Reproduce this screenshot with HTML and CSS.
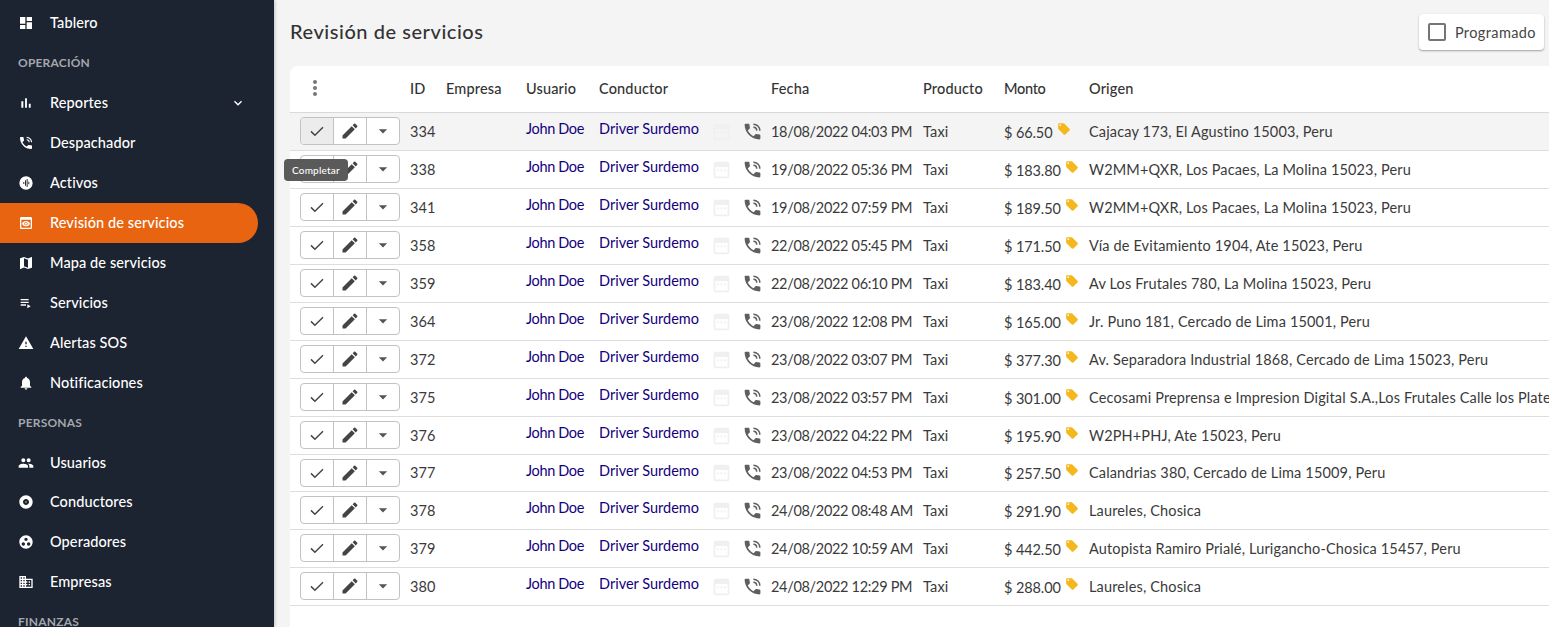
FILE: index.html
```html
<!DOCTYPE html>
<html lang="es">
<head>
  <meta charset="UTF-8">
  <title>Revisión de servicios</title>
  <link rel="stylesheet" href="styles.css">
</head>
<body>
  <svg class="sprite" xmlns="http://www.w3.org/2000/svg">
    <symbol id="i-dashboard" viewBox="0 0 24 24"><path d="M3 13h8V3H3v10zm0 8h8v-6H3v6zm10 0h8V11h-8v10zm0-18v6h8V3h-8z"/></symbol>
    <symbol id="i-bars" viewBox="0 0 24 24"><path d="M5 9.200h3V19H5zM10.600 5h2.800v14h-2.800zm5.600 8H19v6h-2.800z"/></symbol>
    <symbol id="i-phone" viewBox="0 0 24 24"><path d="M20 15.500c-1.250 0-2.450-.2-3.570-.57-.35-.11-.74-.03-1.020.24l-2.200 2.200c-2.830-1.440-5.150-3.750-6.590-6.590l2.200-2.210c.28-.26.36-.65.25-1-.37-1.120-.57-2.320-.57-3.570 0-.55-.45-1-1-1H4c-.55 0-1 .45-1 1 0 9.390 7.610 17 17 17 .55 0 1-.45 1-1v-3.500c0-.55-.45-1-1-1z"/><path d="M13 3.600a7.400 7.400 0 0 1 7.400 7.400M13 7.200a3.800 3.800 0 0 1 3.800 3.800" fill="none" stroke="currentColor" stroke-width="1.700"/></symbol>
    <symbol id="i-waves" viewBox="0 0 24 24"><path fill-rule="evenodd" d="M12 2a10 10 0 1 0 0 20 10 10 0 0 0 0-20zM8 10.500h1.400v3H8zm2.500-2.500h1.400v8h-1.400zm2.500-2h1.400v12H13zm2.500 4h1.400v4h-1.400z"/></symbol>
    <symbol id="i-preview" viewBox="0 0 24 24"><path d="M19 3H5c-1.110 0-2 .9-2 2v14c0 1.100.89 2 2 2h14c1.100 0 2-.9 2-2V5c0-1.100-.89-2-2-2zm0 16H5V7h14v12zm-5.500-6c0 .83-.67 1.500-1.500 1.500s-1.500-.67-1.500-1.500.67-1.500 1.500-1.500 1.500.67 1.500 1.500zM12 9c-2.730 0-5.060 1.660-6 4 .94 2.340 3.270 4 6 4s5.060-1.660 6-4c-.94-2.340-3.270-4-6-4zm0 6.500c-1.380 0-2.500-1.120-2.500-2.500s1.120-2.500 2.500-2.500 2.500 1.120 2.500 2.500-1.120 2.500-2.500 2.500z"/></symbol>
    <symbol id="i-map" viewBox="0 0 24 24"><path d="M20.500 3l-.16.03L15 5.100 9 3 3.360 4.900c-.21.07-.36.25-.36.48V20.500c0 .28.22.5.5.5l.16-.03L9 18.900l6 2.100 5.640-1.900c.21-.07.36-.25.36-.48V3.500c0-.28-.22-.5-.5-.5zM15 19l-6-2.110V5l6 2.110V19z"/></symbol>
    <symbol id="i-playlist" viewBox="0 0 24 24"><path d="M4 10h12v2H4zm0-4h12v2H4zm0 8h8v2H4zm10 0v6l5-3z"/></symbol>
    <symbol id="i-warning" viewBox="0 0 24 24"><path d="M1 21h22L12 2 1 21zm12-3h-2v-2h2v2zm0-4h-2v-4h2v4z"/></symbol>
    <symbol id="i-bell" viewBox="0 0 24 24"><path d="M12 22c1.100 0 2-.9 2-2h-4c0 1.100.9 2 2 2zm6-6v-5c0-3.070-1.630-5.640-4.500-6.320V4c0-.83-.67-1.500-1.500-1.500s-1.500.67-1.500 1.500v.68C7.640 5.360 6 7.920 6 11v5l-2 2v1h16v-1l-2-2z"/></symbol>
    <symbol id="i-people" viewBox="0 0 24 24"><path d="M16 11c1.660 0 2.990-1.340 2.990-3S17.660 5 16 5c-1.660 0-3 1.340-3 3s1.340 3 3 3zm-8 0c1.660 0 2.990-1.340 2.990-3S9.660 5 8 5C6.340 5 5 6.340 5 8s1.340 3 3 3zm0 2c-2.330 0-7 1.170-7 3.500V19h14v-2.500c0-2.330-4.670-3.500-7-3.500zm8 0c-.29 0-.62.02-.97.05 1.160.84 1.970 1.970 1.970 3.450V19h6v-2.500c0-2.330-4.670-3.500-7-3.500z"/></symbol>
    <symbol id="i-album" viewBox="0 0 24 24"><path d="M12 2C6.480 2 2 6.480 2 12s4.480 10 10 10 10-4.480 10-10S17.520 2 12 2zm0 14.500c-2.490 0-4.500-2.010-4.500-4.500S9.510 7.500 12 7.500s4.500 2.010 4.500 4.500-2.010 4.500-4.500 4.500zm0-5.500c-.55 0-1 .45-1 1s.45 1 1 1 1-.45 1-1-.45-1-1-1z"/></symbol>
    <symbol id="i-operator" viewBox="0 0 24 24"><path d="M12 2C6.480 2 2 6.480 2 12s4.480 10 10 10 10-4.480 10-10S17.520 2 12 2zM8 17.500c-1.380 0-2.500-1.120-2.500-2.500s1.120-2.500 2.500-2.500 2.500 1.120 2.500 2.500-1.120 2.500-2.500 2.500zM9.500 8c0-1.380 1.120-2.500 2.500-2.500s2.500 1.120 2.500 2.500-1.120 2.500-2.500 2.500S9.500 9.380 9.500 8zm6.500 9.500c-1.380 0-2.500-1.120-2.500-2.500s1.120-2.500 2.500-2.500 2.500 1.120 2.500 2.500-1.120 2.500-2.500 2.500z"/></symbol>
    <symbol id="i-domain" viewBox="0 0 24 24"><path d="M12 7V3H2v18h20V7H12zM6 19H4v-2h2v2zm0-4H4v-2h2v2zm0-4H4V9h2v2zm0-4H4V5h2v2zm4 12H8v-2h2v2zm0-4H8v-2h2v2zm0-4H8V9h2v2zm0-4H8V5h2v2zm10 12h-8v-2h2v-2h-2v-2h2v-2h-2V9h8v10zm-2-8h-2v2h2v-2zm0 4h-2v2h2v-2z"/></symbol>
    <symbol id="i-expand" viewBox="0 0 24 24"><path d="M16.590 8.590L12 13.170 7.410 8.590 6 10l6 6 6-6z"/></symbol>
    <symbol id="i-check" viewBox="0 0 24 24"><path d="M4 12.500l5.200 5.200L20 6.900" fill="none" stroke="currentColor" stroke-width="1.900"/></symbol>
    <symbol id="i-edit" viewBox="0 0 24 24"><path d="M3 17.250V21h3.750L17.810 9.940l-3.750-3.750L3 17.250zM20.710 7.040c.39-.39.39-1.020 0-1.410l-2.340-2.340c-.39-.39-1.020-.39-1.410 0l-1.830 1.830 3.750 3.750 1.830-1.830z"/></symbol>
    <symbol id="i-drop" viewBox="0 0 24 24"><path d="M7 10l5 5 5-5z"/></symbol>
    <symbol id="i-more" viewBox="0 0 24 24"><path d="M12 8c1.100 0 2-.9 2-2s-.9-2-2-2-2 .9-2 2 .9 2 2 2zm0 2c-1.100 0-2 .9-2 2s.9 2 2 2 2-.9 2-2-.9-2-2-2zm0 6c-1.100 0-2 .9-2 2s.9 2 2 2 2-.9 2-2-.9-2-2-2z"/></symbol>
    <symbol id="i-calendar" viewBox="0 0 24 24"><path fill-rule="evenodd" d="M5 3h14a2 2 0 0 1 2 2v15a2 2 0 0 1-2 2H5a2 2 0 0 1-2-2V5a2 2 0 0 1 2-2zm0 6v11h14V9zm2 3h2v2H7zm4 0h2v2h-2zm4 0h2v2h-2z"/></symbol>
    <symbol id="i-tag" viewBox="0 0 24 24"><path d="M21.410 11.580l-9-9C12.050 2.220 11.550 2 11 2H4c-1.100 0-2 .9-2 2v7c0 .55.22 1.050.59 1.420l9 9c.36.36.86.58 1.410.58.55 0 1.050-.22 1.410-.59l7-7c.37-.36.59-.86.59-1.410 0-.55-.23-1.060-.59-1.420zM5.500 7C4.670 7 4 6.330 4 5.500S4.670 4 5.500 4 7 4.670 7 5.500 6.330 7 5.500 7z"/></symbol>
  </svg>

  <div class="layout">
    <nav class="sidebar">
      <a class="nav-item"><svg class="nav-icon"><use href="#i-dashboard"/></svg>Tablero</a>
      <div class="nav-heading">OPERACIÓN</div>
      <a class="nav-item"><svg class="nav-icon"><use href="#i-bars"/></svg>Reportes<svg class="nav-caret"><use href="#i-expand"/></svg></a>
      <a class="nav-item"><svg class="nav-icon"><use href="#i-phone"/></svg>Despachador</a>
      <a class="nav-item"><svg class="nav-icon"><use href="#i-waves"/></svg>Activos</a>
      <a class="nav-item active"><svg class="nav-icon"><use href="#i-preview"/></svg>Revisión de servicios</a>
      <a class="nav-item"><svg class="nav-icon"><use href="#i-map"/></svg>Mapa de servicios</a>
      <a class="nav-item"><svg class="nav-icon"><use href="#i-playlist"/></svg>Servicios</a>
      <a class="nav-item"><svg class="nav-icon"><use href="#i-warning"/></svg>Alertas SOS</a>
      <a class="nav-item"><svg class="nav-icon"><use href="#i-bell"/></svg>Notificaciones</a>
      <div class="nav-heading">PERSONAS</div>
      <a class="nav-item short"><svg class="nav-icon"><use href="#i-people"/></svg>Usuarios</a>
      <a class="nav-item"><svg class="nav-icon"><use href="#i-album"/></svg>Conductores</a>
      <a class="nav-item"><svg class="nav-icon"><use href="#i-operator"/></svg>Operadores</a>
      <a class="nav-item"><svg class="nav-icon"><use href="#i-domain"/></svg>Empresas</a>
      <div class="nav-heading">FINANZAS</div>
    </nav>

    <main class="content">
      <div class="page-head">
        <h1 class="page-title">Revisión de servicios</h1>
        <label class="toggle-card"><span class="checkbox"></span>Programado</label>
      </div>

      <div class="table-card">
        <table class="services">
          <colgroup>
            <col class="c-actions"><col class="c-id"><col class="c-company"><col class="c-user"><col class="c-driver"><col class="c-cal"><col class="c-phone"><col class="c-date"><col class="c-product"><col class="c-amount"><col class="c-origin">
          </colgroup>
          <thead>
            <tr>
              <th class="more-cell"><svg class="more-icon"><use href="#i-more"/></svg></th>
              <th>ID</th><th>Empresa</th><th>Usuario</th><th>Conductor</th><th></th><th></th><th>Fecha</th><th>Producto</th><th class="amount-head">Monto</th><th>Origen</th>
            </tr>
          </thead>
          <tbody>
            <tr class="hover">
              <td class="actions-cell"><div class="btn-group"><span class="btn pressed"><svg class="btn-check"><use href="#i-check"/></svg></span><span class="btn"><svg class="btn-edit"><use href="#i-edit"/></svg></span><span class="btn"><svg class="btn-drop"><use href="#i-drop"/></svg></span></div></td>
              <td>334</td><td></td><td class="link user">John Doe</td><td class="link">Driver Surdemo</td>
              <td><svg class="cal-icon"><use href="#i-calendar"/></svg></td><td><svg class="phone-icon"><use href="#i-phone"/></svg></td>
              <td class="date">18/08/2022 04:03 PM</td><td>Taxi</td><td class="amount">$ 66.50<svg class="tag-icon"><use href="#i-tag"/></svg></td><td>Cajacay 173, El Agustino 15003, Peru</td>
            </tr>
            <tr>
              <td class="actions-cell"><div class="btn-group"><span class="btn"><svg class="btn-check"><use href="#i-check"/></svg></span><span class="btn"><svg class="btn-edit"><use href="#i-edit"/></svg></span><span class="btn"><svg class="btn-drop"><use href="#i-drop"/></svg></span></div><div class="tooltip">Completar</div></td>
              <td>338</td><td></td><td class="link user">John Doe</td><td class="link">Driver Surdemo</td>
              <td><svg class="cal-icon"><use href="#i-calendar"/></svg></td><td><svg class="phone-icon"><use href="#i-phone"/></svg></td>
              <td class="date">19/08/2022 05:36 PM</td><td>Taxi</td><td class="amount">$ 183.80<svg class="tag-icon"><use href="#i-tag"/></svg></td><td>W2MM+QXR, Los Pacaes, La Molina 15023, Peru</td>
            </tr>
            <tr>
              <td class="actions-cell"><div class="btn-group"><span class="btn"><svg class="btn-check"><use href="#i-check"/></svg></span><span class="btn"><svg class="btn-edit"><use href="#i-edit"/></svg></span><span class="btn"><svg class="btn-drop"><use href="#i-drop"/></svg></span></div></td>
              <td>341</td><td></td><td class="link user">John Doe</td><td class="link">Driver Surdemo</td>
              <td><svg class="cal-icon"><use href="#i-calendar"/></svg></td><td><svg class="phone-icon"><use href="#i-phone"/></svg></td>
              <td class="date">19/08/2022 07:59 PM</td><td>Taxi</td><td class="amount">$ 189.50<svg class="tag-icon"><use href="#i-tag"/></svg></td><td>W2MM+QXR, Los Pacaes, La Molina 15023, Peru</td>
            </tr>
            <tr>
              <td class="actions-cell"><div class="btn-group"><span class="btn"><svg class="btn-check"><use href="#i-check"/></svg></span><span class="btn"><svg class="btn-edit"><use href="#i-edit"/></svg></span><span class="btn"><svg class="btn-drop"><use href="#i-drop"/></svg></span></div></td>
              <td>358</td><td></td><td class="link user">John Doe</td><td class="link">Driver Surdemo</td>
              <td><svg class="cal-icon"><use href="#i-calendar"/></svg></td><td><svg class="phone-icon"><use href="#i-phone"/></svg></td>
              <td class="date">22/08/2022 05:45 PM</td><td>Taxi</td><td class="amount">$ 171.50<svg class="tag-icon"><use href="#i-tag"/></svg></td><td>Vía de Evitamiento 1904, Ate 15023, Peru</td>
            </tr>
            <tr>
              <td class="actions-cell"><div class="btn-group"><span class="btn"><svg class="btn-check"><use href="#i-check"/></svg></span><span class="btn"><svg class="btn-edit"><use href="#i-edit"/></svg></span><span class="btn"><svg class="btn-drop"><use href="#i-drop"/></svg></span></div></td>
              <td>359</td><td></td><td class="link user">John Doe</td><td class="link">Driver Surdemo</td>
              <td><svg class="cal-icon"><use href="#i-calendar"/></svg></td><td><svg class="phone-icon"><use href="#i-phone"/></svg></td>
              <td class="date">22/08/2022 06:10 PM</td><td>Taxi</td><td class="amount">$ 183.40<svg class="tag-icon"><use href="#i-tag"/></svg></td><td>Av Los Frutales 780, La Molina 15023, Peru</td>
            </tr>
            <tr>
              <td class="actions-cell"><div class="btn-group"><span class="btn"><svg class="btn-check"><use href="#i-check"/></svg></span><span class="btn"><svg class="btn-edit"><use href="#i-edit"/></svg></span><span class="btn"><svg class="btn-drop"><use href="#i-drop"/></svg></span></div></td>
              <td>364</td><td></td><td class="link user">John Doe</td><td class="link">Driver Surdemo</td>
              <td><svg class="cal-icon"><use href="#i-calendar"/></svg></td><td><svg class="phone-icon"><use href="#i-phone"/></svg></td>
              <td class="date">23/08/2022 12:08 PM</td><td>Taxi</td><td class="amount">$ 165.00<svg class="tag-icon"><use href="#i-tag"/></svg></td><td>Jr. Puno 181, Cercado de Lima 15001, Peru</td>
            </tr>
            <tr>
              <td class="actions-cell"><div class="btn-group"><span class="btn"><svg class="btn-check"><use href="#i-check"/></svg></span><span class="btn"><svg class="btn-edit"><use href="#i-edit"/></svg></span><span class="btn"><svg class="btn-drop"><use href="#i-drop"/></svg></span></div></td>
              <td>372</td><td></td><td class="link user">John Doe</td><td class="link">Driver Surdemo</td>
              <td><svg class="cal-icon"><use href="#i-calendar"/></svg></td><td><svg class="phone-icon"><use href="#i-phone"/></svg></td>
              <td class="date">23/08/2022 03:07 PM</td><td>Taxi</td><td class="amount">$ 377.30<svg class="tag-icon"><use href="#i-tag"/></svg></td><td>Av. Separadora Industrial 1868, Cercado de Lima 15023, Peru</td>
            </tr>
            <tr>
              <td class="actions-cell"><div class="btn-group"><span class="btn"><svg class="btn-check"><use href="#i-check"/></svg></span><span class="btn"><svg class="btn-edit"><use href="#i-edit"/></svg></span><span class="btn"><svg class="btn-drop"><use href="#i-drop"/></svg></span></div></td>
              <td>375</td><td></td><td class="link user">John Doe</td><td class="link">Driver Surdemo</td>
              <td><svg class="cal-icon"><use href="#i-calendar"/></svg></td><td><svg class="phone-icon"><use href="#i-phone"/></svg></td>
              <td class="date">23/08/2022 03:57 PM</td><td>Taxi</td><td class="amount">$ 301.00<svg class="tag-icon"><use href="#i-tag"/></svg></td><td>Cecosami Preprensa e Impresion Digital S.A.,Los Frutales Calle los Plateros 15023, Peru</td>
            </tr>
            <tr>
              <td class="actions-cell"><div class="btn-group"><span class="btn"><svg class="btn-check"><use href="#i-check"/></svg></span><span class="btn"><svg class="btn-edit"><use href="#i-edit"/></svg></span><span class="btn"><svg class="btn-drop"><use href="#i-drop"/></svg></span></div></td>
              <td>376</td><td></td><td class="link user">John Doe</td><td class="link">Driver Surdemo</td>
              <td><svg class="cal-icon"><use href="#i-calendar"/></svg></td><td><svg class="phone-icon"><use href="#i-phone"/></svg></td>
              <td class="date">23/08/2022 04:22 PM</td><td>Taxi</td><td class="amount">$ 195.90<svg class="tag-icon"><use href="#i-tag"/></svg></td><td>W2PH+PHJ, Ate 15023, Peru</td>
            </tr>
            <tr class="short">
              <td class="actions-cell"><div class="btn-group"><span class="btn"><svg class="btn-check"><use href="#i-check"/></svg></span><span class="btn"><svg class="btn-edit"><use href="#i-edit"/></svg></span><span class="btn"><svg class="btn-drop"><use href="#i-drop"/></svg></span></div></td>
              <td>377</td><td></td><td class="link user">John Doe</td><td class="link">Driver Surdemo</td>
              <td><svg class="cal-icon"><use href="#i-calendar"/></svg></td><td><svg class="phone-icon"><use href="#i-phone"/></svg></td>
              <td class="date">23/08/2022 04:53 PM</td><td>Taxi</td><td class="amount">$ 257.50<svg class="tag-icon"><use href="#i-tag"/></svg></td><td>Calandrias 380, Cercado de Lima 15009, Peru</td>
            </tr>
            <tr>
              <td class="actions-cell"><div class="btn-group"><span class="btn"><svg class="btn-check"><use href="#i-check"/></svg></span><span class="btn"><svg class="btn-edit"><use href="#i-edit"/></svg></span><span class="btn"><svg class="btn-drop"><use href="#i-drop"/></svg></span></div></td>
              <td>378</td><td></td><td class="link user">John Doe</td><td class="link">Driver Surdemo</td>
              <td><svg class="cal-icon"><use href="#i-calendar"/></svg></td><td><svg class="phone-icon"><use href="#i-phone"/></svg></td>
              <td class="date">24/08/2022 08:48 AM</td><td>Taxi</td><td class="amount">$ 291.90<svg class="tag-icon"><use href="#i-tag"/></svg></td><td>Laureles, Chosica</td>
            </tr>
            <tr>
              <td class="actions-cell"><div class="btn-group"><span class="btn"><svg class="btn-check"><use href="#i-check"/></svg></span><span class="btn"><svg class="btn-edit"><use href="#i-edit"/></svg></span><span class="btn"><svg class="btn-drop"><use href="#i-drop"/></svg></span></div></td>
              <td>379</td><td></td><td class="link user">John Doe</td><td class="link">Driver Surdemo</td>
              <td><svg class="cal-icon"><use href="#i-calendar"/></svg></td><td><svg class="phone-icon"><use href="#i-phone"/></svg></td>
              <td class="date">24/08/2022 10:59 AM</td><td>Taxi</td><td class="amount">$ 442.50<svg class="tag-icon"><use href="#i-tag"/></svg></td><td>Autopista Ramiro Prialé, Lurigancho-Chosica 15457, Peru</td>
            </tr>
            <tr>
              <td class="actions-cell"><div class="btn-group"><span class="btn"><svg class="btn-check"><use href="#i-check"/></svg></span><span class="btn"><svg class="btn-edit"><use href="#i-edit"/></svg></span><span class="btn"><svg class="btn-drop"><use href="#i-drop"/></svg></span></div></td>
              <td>380</td><td></td><td class="link user">John Doe</td><td class="link">Driver Surdemo</td>
              <td><svg class="cal-icon"><use href="#i-calendar"/></svg></td><td><svg class="phone-icon"><use href="#i-phone"/></svg></td>
              <td class="date">24/08/2022 12:29 PM</td><td>Taxi</td><td class="amount">$ 288.00<svg class="tag-icon"><use href="#i-tag"/></svg></td><td>Laureles, Chosica</td>
            </tr>
          </tbody>
        </table>
      </div>
    </main>
  </div>
</body>
</html>
```

FILE: styles.css
```css
html, body {
  height: 100%;
  margin: 0;
  overflow: hidden;
}

body {
  background: #f4f4f4;
  color: #2e2e2e;
  font-family: 'Lato', 'Noto Sans', sans-serif;
  font-size: 14.5px;
}

.sprite {
  display: none;
}

.layout {
  display: flex;
  height: 627px;
  overflow: hidden;
}

/* sidebar */
.sidebar {
  width: 274px;
  flex: none;
  padding: 3px 16px 0 0;
  box-sizing: border-box;
  background: #1c2331;
  color: #fff;
  box-shadow: 1px 0 3px rgba(0, 0, 0, 0.2);
}

.nav-item {
  display: flex;
  align-items: center;
  height: 40px;
  padding: 0 0 1px 18px;
  box-sizing: border-box;
  color: #fff;
  font-size: 14.5px;
  font-weight: 500;
  letter-spacing: 0.1px;
}

.nav-item.short {
  height: 39px;
}

.nav-item.active {
  background: #e96411;
  border-radius: 0 20px 20px 0;
}

.nav-icon {
  width: 16px;
  height: 16px;
  margin: 1px 16px 0 0;
  fill: #fff;
  color: #fff;
}

.nav-caret {
  width: 16px;
  height: 16px;
  margin: 1px 12px 0 auto;
  fill: #fff;
}

.nav-heading {
  display: flex;
  align-items: center;
  height: 40px;
  padding: 0 0 2px 18px;
  box-sizing: border-box;
  color: #a4a7ad;
  font-size: 12px;
  font-weight: 700;
  letter-spacing: 0.2px;
}

/* main area */
.content {
  flex: 1;
  min-width: 0;
  padding-left: 16px;
}

.page-head {
  display: flex;
  justify-content: space-between;
  align-items: flex-start;
  height: 66px;
}

.page-title {
  margin: 18px 0 0;
  font-size: 20px;
  font-weight: 500;
  line-height: 26px;
  color: #333;
  letter-spacing: 0.55px;
}

.toggle-card {
  display: flex;
  align-items: center;
  gap: 9px;
  height: 36px;
  margin: 14px 5px 0 0;
  padding: 0 8px 0 9px;
  background: #fff;
  border-radius: 4px;
  box-shadow: 0 1px 2px rgba(0, 0, 0, 0.35);
  font-size: 14.5px;
  color: #444;
  letter-spacing: 0.4px;
}

.checkbox {
  width: 14px;
  height: 14px;
  border: 2px solid #757575;
  border-radius: 2px;
}

.table-card {
  height: 600px;
  background: #fff;
  border-radius: 8px 0 0 0;
}

.services {
  width: 1259px;
  table-layout: fixed;
  border-collapse: collapse;
  white-space: nowrap;
}

.c-actions { width: 120px; }
.c-id { width: 36px; }
.c-company { width: 80px; }
.c-user { width: 73px; }
.c-driver { width: 115px; }
.c-cal { width: 31px; }
.c-phone { width: 26px; }
.c-date { width: 152px; }
.c-product { width: 81px; }
.c-amount { width: 85px; }
.c-origin { width: 460px; }

.services th {
  box-sizing: border-box;
  height: 46px;
  padding: 0 0 1px;
  text-align: left;
  font-weight: 500;
  color: #333;
  letter-spacing: 0.15px;
  border-bottom: 1px solid #d9d9d9;
}

.services th.amount-head {
  letter-spacing: -0.3px;
}

.services td {
  box-sizing: border-box;
  height: 38px;
  padding: 0;
  vertical-align: middle;
  border-bottom: 1px solid #dedede;
  color: #3a3a3a;
  letter-spacing: 0.15px;
}

.services tr.short td {
  height: 37px;
}

.services tr.hover td {
  background: #f4f4f4;
}

.services td.link {
  color: #13007c;
  padding-bottom: 5px;
  letter-spacing: 0;
}

.services td.user {
  letter-spacing: -0.35px;
}

.services td.date {
  letter-spacing: -0.32px;
}

.services td.amount {
  letter-spacing: -0.1px;
}

.more-cell {
  padding-left: 13px !important;
}

.more-icon {
  display: block;
  width: 24px;
  height: 24px;
  fill: #777;
}

.actions-cell {
  position: relative;
  padding-left: 10px !important;
}

.btn-group {
  display: flex;
  width: 100px;
  height: 28px;
  box-sizing: border-box;
  border: 1px solid #c2c2c2;
  border-radius: 4px;
  background: #fff;
}

.btn {
  flex: 1;
  display: flex;
  align-items: center;
  justify-content: center;
  border-right: 1px solid #c2c2c2;
}

.btn:last-child {
  border-right: none;
}

.btn.pressed {
  background: #ececec;
  border-radius: 3px 0 0 3px;
}

.btn-check {
  width: 18px;
  height: 18px;
  color: #444;
}

.btn-edit {
  width: 20px;
  height: 20px;
  fill: #444;
}

.btn-drop {
  width: 20px;
  height: 20px;
  fill: #555;
}

.tooltip {
  position: absolute;
  left: -6px;
  top: 8px;
  padding: 0 8px;
  height: 22px;
  line-height: 22px;
  background: #5a5a5a;
  color: #fff;
  font-size: 10px;
  font-weight: 500;
  letter-spacing: 0.2px;
  border-radius: 4px;
}

.cal-icon {
  display: block;
  width: 21px;
  height: 21px;
  margin-left: -3px;
  fill: #f0f0f0;
}

.phone-icon {
  display: block;
  width: 21px;
  height: 21px;
  margin-left: -3px;
  fill: #5f5f5f;
  color: #5f5f5f;
}

.tag-icon {
  width: 14px;
  height: 14px;
  margin-left: 4px;
  vertical-align: 2px;
  fill: #f5b81c;
}
```
